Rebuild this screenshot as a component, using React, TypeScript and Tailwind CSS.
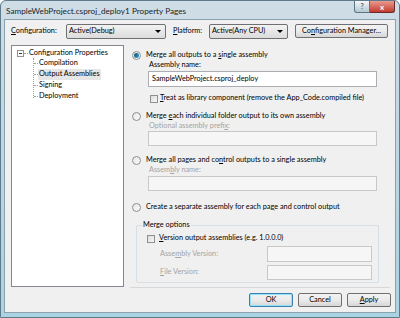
import React from "react";

const font = { fontFamily: 'Lato, "Noto Sans", sans-serif' };

function Radio({ checked }: { checked?: boolean }) {
  return (
    <div className="w-[9px] h-[9px] rounded-full border border-[#8e8f8f] bg-gradient-to-br from-[#e6e6e6] to-[#fbfbfb] flex items-center justify-center shrink-0">
      {checked && <div className="w-[5px] h-[5px] rounded-full bg-gradient-to-br from-[#0a4d6e] to-[#3aa5d3]" />}
    </div>
  );
}

function Check() {
  return <div className="w-[8px] h-[8px] border border-[#8e8f8f] bg-gradient-to-br from-[#dcdcdc] to-[#f8f8f8] shrink-0" />;
}

function U({ children }: { children: React.ReactNode }) {
  return <span className="underline underline-offset-1 decoration-[0.5px]">{children}</span>;
}

function Button({ children, w, def }: { children: React.ReactNode; w: string; def?: boolean }) {
  return (
    <div
      className={`${w} h-[14px] rounded-[2px] border ${def ? "border-[#3c7fb1] shadow-[inset_0_0_0_1px_#8ee4f8]" : "border-[#707070]"} bg-gradient-to-b from-[#f2f2f2] via-[#ebebeb] to-[#d6d6d6] flex items-center justify-center text-[7.3px] text-black`}
    >
      <span>{children}</span>
    </div>
  );
}

function Combo({ w, text }: { w: string; text: string }) {
  return (
    <div className={`${w} h-[15px] rounded-[2px] border border-[#707070] bg-gradient-to-b from-[#f2f2f2] to-[#dcdcdc] flex items-center justify-between pl-[2px] pr-[4px]`}>
      <span className="text-[7.3px]">{text}</span>
      <span className="w-0 h-0 border-l-[3px] border-r-[3px] border-t-[3px] border-l-transparent border-r-transparent border-t-black" />
    </div>
  );
}

export default function App() {
  return (
    <div style={font} className="relative w-[400px] h-[318px] bg-gradient-to-b from-[#cfdde6] via-[#bcd6e3] to-[#a9d3e3] border border-[#5f7b8a] rounded-t-[6px] flex flex-col text-black overflow-hidden">
      {/* title bar */}
      <div className="h-[18px] shrink-0">
        <div className="pl-[5px] pt-[4px] text-[8.2px] text-[#1e1e1e]">SampleWebProject.csproj_deploy1 Property Pages</div>
      </div>
      <div className="absolute top-0 right-[4px] flex">
        <div className="w-[16px] h-[12px] rounded-bl-[3px] border border-t-0 border-[#5d7583] bg-gradient-to-b from-[#f4f7f9] to-[#b4c8d3] flex items-center justify-center text-[7px] font-bold text-[#56646d]">?</div>
        <div className="w-[25px] h-[12px] rounded-br-[3px] border border-t-0 border-l-0 border-[#6b2a2a] bg-gradient-to-b from-[#e89a90] to-[#c2392d] flex items-center justify-center text-[8px] font-bold text-white">x</div>
      </div>

      {/* client area */}
      <div className="mx-[3px] h-[294px] border border-[#8aa1ae] bg-[#f0f0f0] flex flex-col">
        {/* top row */}
        <div className="flex items-center h-[16px] mt-[3px] pl-[6px] text-[7.3px]">
          <span className="w-[55px]"><U>C</U>onfiguration:</span>
          <Combo w="w-[100px]" text="Active(Debug)" />
          <span className="ml-[7px] w-[36px]"><U>P</U>latform:</span>
          <Combo w="w-[79px]" text="Active(Any CPU)" />
          <div className="ml-[7px]">
            <Button w="w-[93px]">Co<U>n</U>figuration Manager...</Button>
          </div>
        </div>

        <div className="flex mt-[6px] h-[242px]">
          {/* tree */}
          <div className="ml-[6px] w-[113px] h-[242px] bg-white border border-[#828790] text-[7.3px] pt-[2px]">
            <div className="flex items-center h-[10px] pl-[5px]">
              <div className="w-[7px] h-[7px] border border-[#929292] bg-white flex items-center justify-center">
                <div className="w-[3px] h-px bg-[#333]" />
              </div>
              <div className="w-[4px] border-t border-dotted border-[#a0a0a0]" />
              <span className="ml-px">Configuration Properties</span>
            </div>
            <div className="ml-[21px] border-l border-dotted border-[#a0a0a0] h-[40px] flex flex-col">
              {["Compilation", "Output Assemblies", "Signing", "Deployment"].map((t) => (
                <div key={t} className="flex items-center h-[11px]">
                  <div className="w-[4px] border-t border-dotted border-[#a0a0a0]" />
                  <span className={t === "Output Assemblies" ? "bg-[#e6e6e6] px-px" : "px-px"}>{t}</span>
                </div>
              ))}
            </div>
          </div>

          {/* right page */}
          <div className="ml-[8px] w-[256px] flex flex-col text-[7.3px]">
            <div className="flex items-center h-[10px] mt-[5px] gap-[5px]">
              <Radio checked />
              <span>Merge all outputs to a <U>s</U>ingle assembly</span>
            </div>
            <div className="h-[10px] ml-[17px] flex items-center"><span>Assembl<U>y</U> name:</span></div>
            <div className="ml-[16px] mt-px w-[229px] h-[16px] bg-white border border-[#abadb3] flex items-center pl-[3px]">SampleWebProject.csproj_deploy</div>
            <div className="flex items-center h-[9px] mt-[7px] ml-[18px] gap-[2px]">
              <Check />
              <span><U>T</U>reat as library component (remove the App_Code.compiled file)</span>
            </div>
            <div className="flex items-center h-[10px] mt-[8px] gap-[5px]">
              <Radio />
              <span>Merge <U>e</U>ach individual folder output to its own assembly</span>
            </div>
            <div className="h-[10px] ml-[17px] flex items-center text-[#a4a4a4]"><span>Optional assembly prefi<U>x</U>:</span></div>
            <div className="ml-[16px] w-[229px] h-[15px] bg-[#f6f6f6] border border-[#c8c8c8]" />
            <div className="flex items-center h-[10px] mt-[9px] gap-[5px]">
              <Radio />
              <span>Merge all pages and co<U>n</U>trol outputs to a single assembly</span>
            </div>
            <div className="h-[10px] ml-[17px] flex items-center text-[#a4a4a4]"><span>Assem<U>b</U>ly name:</span></div>
            <div className="ml-[16px] mt-px w-[229px] h-[15px] bg-[#f6f6f6] border border-[#c8c8c8]" />
            <div className="flex items-center h-[10px] mt-[11px] gap-[5px]">
              <Radio />
              <span>Create a separate assembly for each pa<U>g</U>e and control output</span>
            </div>

            {/* merge options group */}
            <div className="relative mt-[13px] ml-[4px] w-[243px] h-[58px] border border-[#d5dfe5] rounded-[2px]">
              <span className="absolute -top-[6px] left-[5px] bg-[#f0f0f0] px-px leading-[10px]">Merge options</span>
              <div className="flex items-center h-[9px] mt-[8px] ml-[10px] gap-[4px]">
                <Check />
                <span><U>V</U>ersion output assemblies (e.g. 1.0.0.0)</span>
              </div>
              <div className="flex items-center mt-[3px] h-[16px] text-[#a4a4a4]">
                <span className="ml-[23px] w-[107px]">Asse<U>m</U>bly Version:</span>
                <div className="w-[105px] h-[16px] bg-[#f6f6f6] border border-[#c8c8c8]" />
              </div>
              <div className="flex items-center mt-[3px] h-[15px] text-[#a4a4a4]">
                <span className="ml-[23px] w-[107px]"><U>F</U>ile Version:</span>
                <div className="w-[105px] h-[15px] bg-[#f6f6f6] border border-[#c8c8c8]" />
              </div>
            </div>
          </div>
        </div>

        <div className="ml-[125px] w-[260px] border-t border-[#d8d8d8]" />

        {/* buttons */}
        <div className="flex justify-end gap-[5px] mt-[5px] pr-[4px]">
          <Button w="w-[44px]" def>OK</Button>
          <Button w="w-[44px]">Cancel</Button>
          <Button w="w-[44px]"><U>A</U>pply</Button>
        </div>
      </div>
    </div>
  );
}
